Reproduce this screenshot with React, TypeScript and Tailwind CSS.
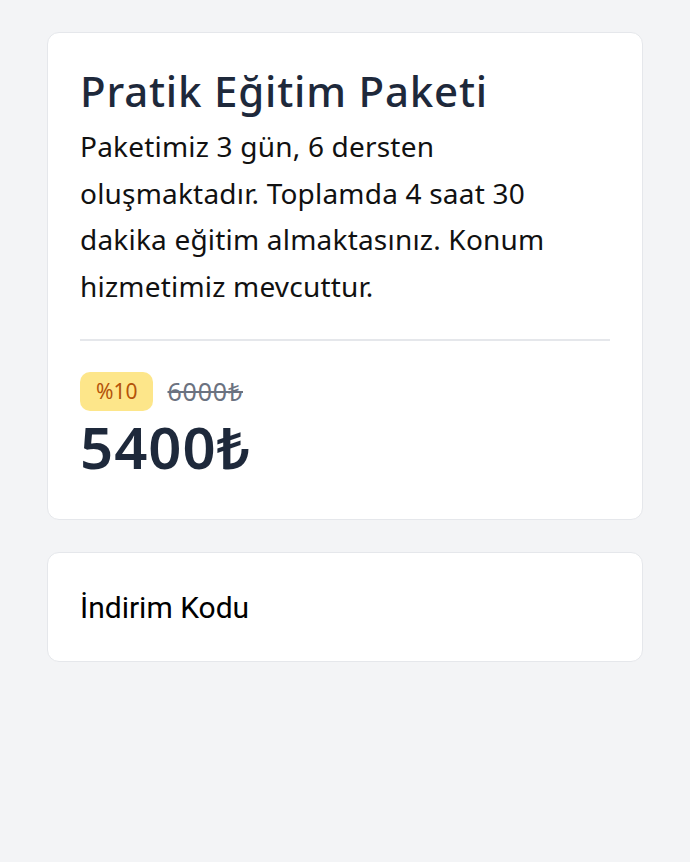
export default function App() {
    return (
        <div className="min-h-[862px] w-full bg-[#f3f4f6] px-[47px] pt-8 flex flex-col gap-8" style={{ fontFamily: '"Noto Sans", sans-serif' }}>
            <div className="bg-white border border-[#e5e7eb] rounded-xl px-8 pt-[31px] pb-[40px] [font-variant-ligatures:none]">
                <h1 className="text-[42px] leading-[54px] tracking-[0.8px] font-medium text-[#1e293b]">Pratik Eğitim Paketi</h1>
                <p className="mt-[5px] text-[28px] leading-[46.5px] tracking-[0.2px] text-[#111111]">
                    Paketimiz 3 gün, 6 dersten oluşmaktadır. Toplamda 4 saat 30 dakika eğitim almaktasınız. Konum hizmetimiz mevcuttur.
                </p>
                <div className="mt-[30px] border-t-2 border-[#e5e7eb]" />
                <div className="mt-[31px] flex items-center gap-[14px]">
                    <span className="bg-[#fde68a] text-[#b45309] rounded-[10px] px-4 h-[39px] flex items-center text-[21px]">%10</span>
                    <span className="text-[25px] tracking-[0.8px] text-[#6b7280] line-through">6000₺</span>
                </div>
                <div className="mt-1 text-[58px] leading-[64px] tracking-[1px] font-semibold text-[#1e293b]">5400₺</div>
            </div>
            <div className="bg-white border border-[#e5e7eb] rounded-xl px-8 h-[110px] flex items-center">
                <span className="text-[30px] text-black" style={{ fontFamily: 'Roboto, sans-serif' }}>İndirim Kodu</span>
            </div>
        </div>
    );
}
